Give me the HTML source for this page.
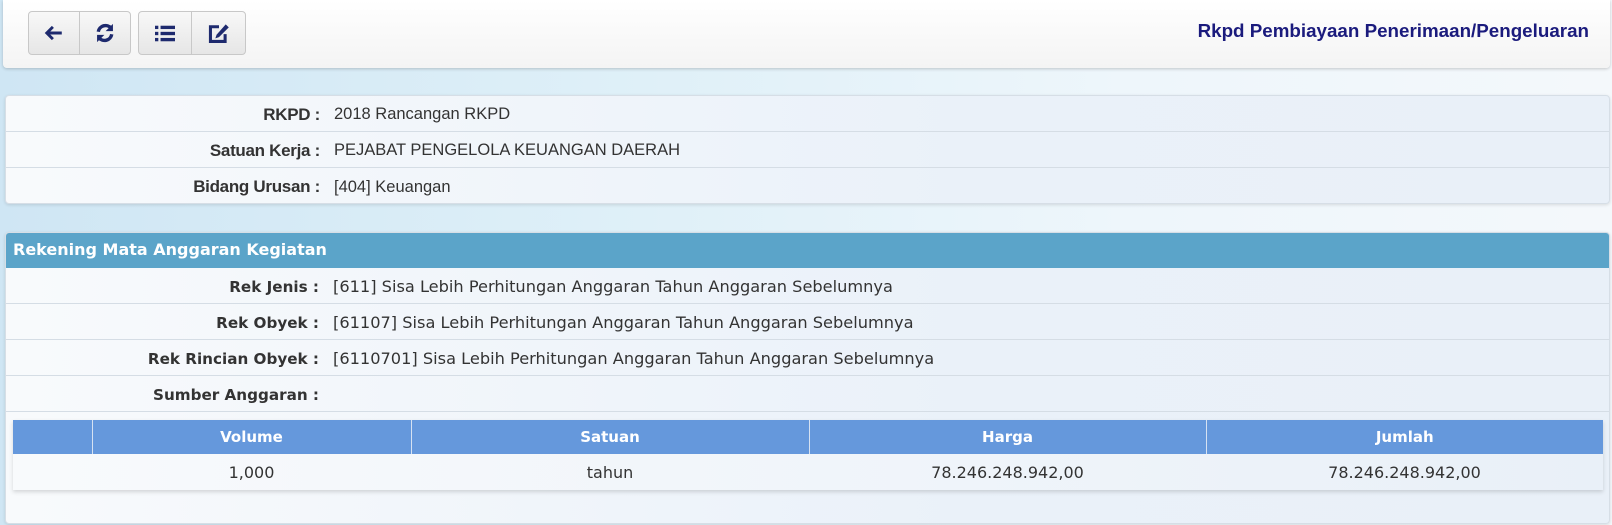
<!DOCTYPE html>
<html><head><meta charset="utf-8"><style>
*{box-sizing:border-box;margin:0;padding:0}
body{width:1612px;height:525px;overflow:hidden;background:linear-gradient(90deg,#cfe6f4 0%,#dff0f8 40%,#eef6fb 70%,#f4f8fb 100%);font-family:"DejaVu Sans",Verdana,sans-serif;color:#333;position:relative}
.top{position:absolute;left:3px;top:0;width:1607px;height:68px;background:linear-gradient(#fff,#f4f4f4);border-radius:0 0 4px 4px;box-shadow:0 1px 3px rgba(0,0,0,.2)}
.grp{position:absolute;top:11px;height:44px;border:1px solid #c8c8c8;border-radius:4px;background:linear-gradient(#f8f8f8,#e6e6e6);display:flex}
.grp div{height:42px;display:flex;align-items:center;justify-content:center}
.grp div+div{border-left:1px solid #c8c8c8}
.title{position:absolute;right:21px;top:20px;font-family:"Liberation Sans",Arial,sans-serif;font-weight:bold;font-size:18.8px;color:#1b1b7d}
.panel{position:absolute;left:5px;width:1605px;background:linear-gradient(90deg,#f8fafc,#eaf1f9 60%,#e9f0f8);border:1px solid #d6dee6;border-radius:4px;box-shadow:0 1px 3px rgba(0,0,0,.12)}
.row{height:36px;border-bottom:1px solid #d5dde5;display:flex;align-items:center;font-size:16.2px;padding-top:2px}
.row .l{width:319px;text-align:right;font-weight:bold;padding-right:6px;font-size:15.2px}
.row .v{padding-left:8px}
.p1 .row{font-family:"Liberation Sans",Arial,sans-serif;font-size:16.5px}
.p1 .row .l{width:320px;font-size:17px;letter-spacing:-0.3px}
.hdr{height:35px;background:#5ba4c9;color:#fff;font-weight:bold;font-size:16px;padding:7px 0 0 7px;border-radius:3px 3px 0 0}
table{position:absolute;left:7px;top:187px;border-collapse:collapse;font-size:16px;box-shadow:0 2px 4px rgba(0,0,0,.15);background:linear-gradient(90deg,#f8fafc,#e9f0f8)}
th{background:#6598dc;color:#fff;height:34px;border-left:1px solid #d6e2f2;font-weight:bold;font-size:15px}
td{height:36px;text-align:center}
</style></head><body>
<div class="top">
 <div class="grp" style="left:25px;width:103px">
  <div style="width:50px"><svg width="20" height="18" viewBox="0 0 18 16"><path d="M16 8H3M8 2.5L2.5 8 8 13.5" stroke="#1e2a6e" stroke-width="2.6" fill="none"/></svg></div>
  <div style="width:51px"><svg width="22" height="22" viewBox="0 0 18 18"><path d="M3.5 8A6 6 0 0 1 14 5" stroke="#1e2a6e" stroke-width="2.8" fill="none"/><path d="M15.5 1.5V7.5H9.5Z" fill="#1e2a6e"/><path d="M14.5 10A6 6 0 0 1 4 13" stroke="#1e2a6e" stroke-width="2.8" fill="none"/><path d="M2.5 16.5V10.5H8.5Z" fill="#1e2a6e"/></svg></div>
 </div>
 <div class="grp" style="left:135px;width:108px">
  <div style="width:52px"><svg width="20" height="17" viewBox="0 0 18 14"><g fill="#1e2a6e"><rect x="0" y="0" width="3" height="3"/><rect x="0" y="5.5" width="3" height="3"/><rect x="0" y="11" width="3" height="3"/><rect x="5" y="0" width="13" height="3"/><rect x="5" y="5.5" width="13" height="3"/><rect x="5" y="11" width="13" height="3"/></g></svg></div>
  <div style="width:54px"><svg width="22" height="21" viewBox="0 0 18 17"><path d="M9 3H2V15H14V9" stroke="#1e2a6e" stroke-width="2.5" fill="none"/><path d="M14.5 1L17 3.5 9 11.5 6 12.5 7 9.5Z" fill="#1e2a6e"/></svg></div>
 </div>
 <div class="title">Rkpd Pembiayaan Penerimaan/Pengeluaran</div>
</div>
<div class="panel p1" style="top:95px;height:109px">
 <div class="row"><div class="l">RKPD :</div><div class="v">2018 Rancangan RKPD</div></div>
 <div class="row"><div class="l">Satuan Kerja :</div><div class="v">PEJABAT PENGELOLA KEUANGAN DAERAH</div></div>
 <div class="row" style="border:0"><div class="l">Bidang Urusan :</div><div class="v">[404] Keuangan</div></div>
</div>
<div class="panel" style="top:232px;height:292px">
 <div class="hdr">Rekening Mata Anggaran Kegiatan</div>
 <div class="row"><div class="l">Rek Jenis :</div><div class="v">[611] Sisa Lebih Perhitungan Anggaran Tahun Anggaran Sebelumnya</div></div>
 <div class="row"><div class="l">Rek Obyek :</div><div class="v">[61107] Sisa Lebih Perhitungan Anggaran Tahun Anggaran Sebelumnya</div></div>
 <div class="row"><div class="l">Rek Rincian Obyek :</div><div class="v">[6110701] Sisa Lebih Perhitungan Anggaran Tahun Anggaran Sebelumnya</div></div>
 <div class="row"><div class="l">Sumber Anggaran :</div><div class="v"></div></div>
 <table>
  <tr><th style="width:79px;border-left:0"></th><th style="width:319px">Volume</th><th style="width:398px">Satuan</th><th style="width:397px">Harga</th><th style="width:397px">Jumlah</th></tr>
  <tr><td></td><td>1,000</td><td>tahun</td><td>78.246.248.942,00</td><td>78.246.248.942,00</td></tr>
 </table>
</div>
</body></html>
